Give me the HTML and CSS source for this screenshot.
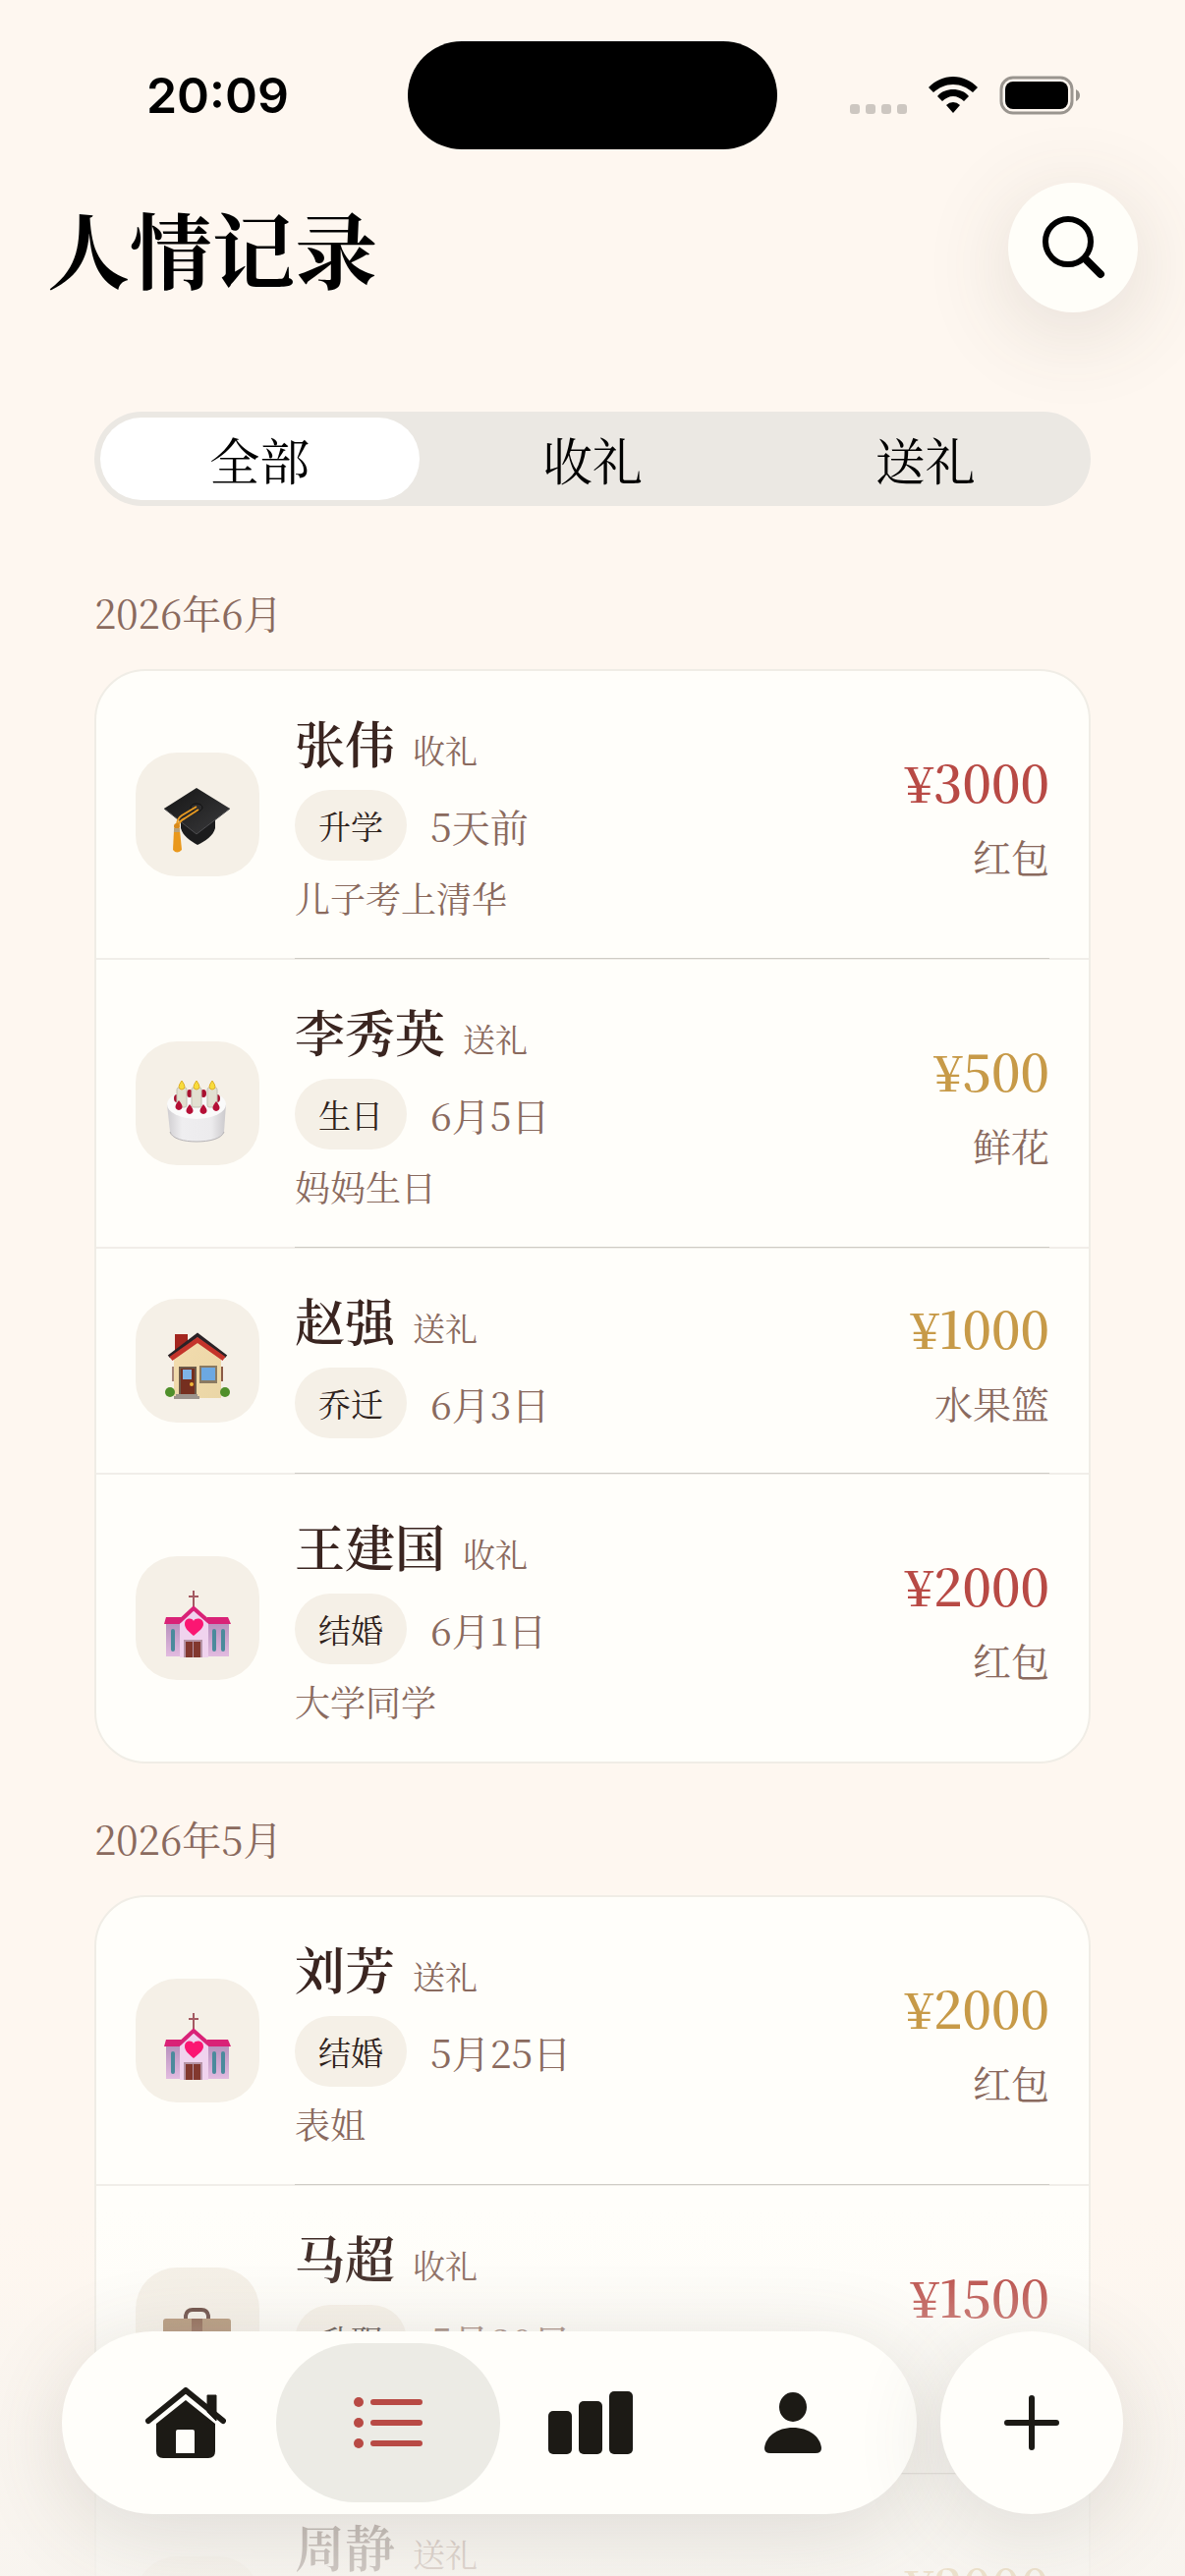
FILE: index.html
```html
<!DOCTYPE html>
<html lang="zh-CN">
  <head>
    <meta charset="UTF-8" />
    <meta name="viewport" content="width=device-width, initial-scale=1.0" />
    <title>人情记录</title>
    <link rel="stylesheet" href="styles.css" />
  </head>

  <body>
    <!-- event icons, used by the rows below -->
    <svg class="sprite" aria-hidden="true">
      <defs>
        <linearGradient id="cap-top" x1="0" y1="0" x2="1" y2="1">
          <stop offset="0" stop-color="#151515" />
          <stop offset="1" stop-color="#3a3a3c" />
        </linearGradient>
        <linearGradient id="cake-side" x1="0" y1="0" x2="1" y2="0">
          <stop offset="0" stop-color="#cfcdd0" />
          <stop offset="0.25" stop-color="#efeef0" />
          <stop offset="0.75" stop-color="#ecebed" />
          <stop offset="1" stop-color="#cbc9cc" />
        </linearGradient>
        <linearGradient id="wall" x1="0" y1="0" x2="1" y2="1">
          <stop offset="0" stop-color="#f3dcae" />
          <stop offset="1" stop-color="#ead6a6" />
        </linearGradient>
        <linearGradient id="wing" x1="0" y1="0" x2="0" y2="1">
          <stop offset="0" stop-color="#b58fbb" />
          <stop offset="1" stop-color="#e2bbe0" />
        </linearGradient>
        <linearGradient id="leather" x1="0" y1="0" x2="0" y2="1">
          <stop offset="0" stop-color="#a5825f" />
          <stop offset="1" stop-color="#7d5334" />
        </linearGradient>
      </defs>

      <symbol id="cap" viewBox="0 0 72 72">
        <path d="M19 34v10c2 8 10 13 17 17c8-4 16-9 18-17V34z" fill="#1c1c1d" />
        <path d="M35 3L69 24L35 50L2 24z" fill="url(#cap-top)" />
        <path d="M2 24L35 50L69 24" fill="none" stroke="#4d4d50" stroke-width="1" />
        <ellipse cx="35" cy="23" rx="6" ry="4" fill="#2c2c2e" stroke="#101010" />
        <path d="M35 22L20 31Q15 34 15 42M37 25L23 34Q17 37 16 42" fill="none" stroke="#e79a22" stroke-width="2" />
        <circle cx="15" cy="42" r="3" fill="#d98a1b" />
        <path d="M12 46h6l2 20q-5 5-9 0z" fill="#e9981c" />
        <rect x="12" y="44" width="6" height="4" fill="#b9a27a" />
      </symbol>

      <symbol id="cake" viewBox="0 0 72 72">
        <path d="M5 31L8 59C10 66 22 69 35 69S61 66 63 59L65 31z" fill="url(#cake-side)" />
        <path d="M8 59C10 66 22 69 35 69S61 66 63 59" fill="none" stroke="#b5b2b5" stroke-width="1" />
        <ellipse cx="35" cy="31" rx="30" ry="15" fill="#fafafa" />
        <g fill="#a8102f">
          <ellipse cx="15" cy="25" rx="3" ry="4" />
          <ellipse cx="28" cy="20" rx="3" ry="4" />
          <ellipse cx="42" cy="20" rx="3" ry="4" />
          <ellipse cx="56" cy="25" rx="3" ry="4" />
        </g>
        <g fill="#e2e0d1" stroke="#c2c0b2" stroke-width="1">
          <rect x="15" y="14" width="10" height="20" rx="2" />
          <rect x="30" y="14" width="10" height="20" rx="2" />
          <rect x="46" y="14" width="10" height="20" rx="2" />
        </g>
        <g fill="#f8dc3c" stroke="#dfae22" stroke-width="1">
          <path d="M20 7q6 8 0 9q-6-1 0-9z" />
          <path d="M35 7q6 8 0 9q-6-1 0-9z" />
          <path d="M51 7q6 8 0 9q-6-1 0-9z" />
        </g>
        <g fill="#b50f35">
          <path d="M17 27q7 8 0 10q-7-2 0-10z" />
          <path d="M28 31q7 8 0 10q-7-2 0-10z" />
          <path d="M42 31q7 8 0 10q-7-2 0-10z" />
          <path d="M55 28q7 8 0 10q-7-2 0-10z" />
        </g>
      </symbol>

      <symbol id="house" viewBox="0 0 72 72">
        <rect x="13" y="3" width="13" height="20" fill="#a3261f" />
        <rect x="10" y="36" width="3" height="15" fill="#a58478" />
        <rect x="59" y="36" width="3" height="15" fill="#8b5a45" />
        <path d="M12 68V25L36 8L60 25V68z" fill="url(#wall)" />
        <path d="M7 26L36 4L65 26" fill="none" stroke="#2a2226" stroke-width="4" />
        <path d="M9 28L36 9L63 28" fill="none" stroke="#c4342b" stroke-width="5" />
        <rect x="17" y="36" width="18" height="29" fill="#6d5a4a" />
        <rect x="19" y="38" width="14" height="27" fill="#752f1f" />
        <rect x="21" y="39" width="9" height="10" fill="#7fb4e6" />
        <circle cx="30" cy="54" r="2" fill="#f0b73a" />
        <rect x="38" y="35" width="18" height="18" fill="#8a7a62" />
        <rect x="40" y="37" width="14" height="13" fill="#6ca8e2" />
        <circle cx="8" cy="62" r="5" fill="#4f8f2a" />
        <circle cx="64" cy="62" r="5" fill="#4f8f2a" />
        <path d="M14 64h22v2h2v3H12v-3h2z" fill="#9b938c" />
      </symbol>

      <symbol id="church" viewBox="0 0 72 72">
        <path d="M32 2v18M27 8h10" stroke="#a45a62" stroke-width="2" />
        <rect x="4" y="33" width="16" height="36" fill="url(#wing)" />
        <rect x="46" y="33" width="22" height="36" fill="url(#wing)" />
        <path d="M4 29h16v7H2z" fill="#d92277" />
        <path d="M46 29h21l3 7H46z" fill="#d92277" />
        <path d="M18 70V34L32 21L47 34V70z" fill="#f0d3ee" />
        <path d="M17 34L32 20L48 34" fill="none" stroke="#d92277" stroke-width="4" />
        <path d="M32 48C26 43 23 40 23 36C23 30 30 29 32 33C34 29 42 30 42 36C42 40 38 43 32 48z" fill="#fb1672" />
        <rect x="9" y="41" width="4" height="23" rx="2" fill="#4b8a9c" />
        <rect x="51" y="41" width="4" height="23" rx="2" fill="#4b8a9c" />
        <rect x="60" y="41" width="4" height="23" rx="2" fill="#4b8a9c" />
        <rect x="22" y="52" width="19" height="18" fill="#b694a6" />
        <rect x="24" y="54" width="7" height="16" fill="#82382f" />
        <rect x="32" y="54" width="7" height="16" fill="#82382f" />
      </symbol>

      <symbol id="briefcase" viewBox="0 0 72 72">
        <path d="M24 19v-3q1-6 7-6h9q6 0 7 6v3" fill="none" stroke="#4e2a22" stroke-width="4" />
        <rect x="1" y="19" width="69" height="46" rx="3" fill="url(#leather)" />
        <rect x="30" y="19" width="11" height="46" fill="#75452e" />
      </symbol>
    </svg>

    <div class="app">
      <div class="statusbar">
        <span class="clock">20:09</span>
        <span class="island"></span>
        <div class="indicators">
          <span class="dots"><i></i><i></i><i></i><i></i></span>
          <svg class="wifi" viewBox="0 0 50 38" aria-hidden="true">
            <path d="M25 0C35 0 43 4 50 11L45 16C39 11 33 8 25 8S11 11 5 16L0 11C7 4 15 0 25 0z" />
            <path d="M25 13C31 13 37 15 41 20L36 25C33 22 29 20 25 20S17 22 14 25L9 20C13 15 19 13 25 13z" />
            <path d="M25 26Q29 26 32 29L25 37L18 29Q21 26 25 26z" />
          </svg>
          <svg class="battery" viewBox="0 0 83 40" aria-hidden="true">
            <rect x="2" y="2" width="72" height="36" rx="12" fill="none" stroke="#9a958f" stroke-width="3" />
            <rect x="6" y="6" width="64" height="28" rx="8" />
            <path d="M78 14q4 2 4 6t-4 6z" fill="#9a958f" />
          </svg>
        </div>
      </div>

      <header class="topbar">
        <h1>人情记录</h1>
        <button class="search" type="button" aria-label="搜索">
          <svg viewBox="0 0 66 66" aria-hidden="true">
            <circle cx="28" cy="27" r="23" />
            <path d="M46 45L61 60" class="handle" />
          </svg>
        </button>
      </header>

      <div class="segmented">
        <button type="button" class="active">全部</button>
        <button type="button">收礼</button>
        <button type="button">送礼</button>
      </div>

      <main>
        <section>
          <h2>2026年6月</h2>
          <ul class="card">
            <li class="row">
              <span class="tile"><svg><use href="#cap" /></svg></span>
              <div class="info">
                <div class="who"><h3>张伟</h3><span class="kind">收礼</span></div>
                <div class="when"><span class="tag">升学</span><time>5天前</time></div>
                <p class="note">儿子考上清华</p>
              </div>
              <div class="value"><strong class="in">¥3000</strong><span>红包</span></div>
            </li>
            <li class="row">
              <span class="tile"><svg><use href="#cake" /></svg></span>
              <div class="info">
                <div class="who"><h3>李秀英</h3><span class="kind">送礼</span></div>
                <div class="when"><span class="tag">生日</span><time>6月5日</time></div>
                <p class="note">妈妈生日</p>
              </div>
              <div class="value"><strong class="out">¥500</strong><span>鲜花</span></div>
            </li>
            <li class="row">
              <span class="tile"><svg><use href="#house" /></svg></span>
              <div class="info">
                <div class="who"><h3>赵强</h3><span class="kind">送礼</span></div>
                <div class="when"><span class="tag">乔迁</span><time>6月3日</time></div>
              </div>
              <div class="value"><strong class="out">¥1000</strong><span>水果篮</span></div>
            </li>
            <li class="row">
              <span class="tile"><svg><use href="#church" /></svg></span>
              <div class="info">
                <div class="who"><h3>王建国</h3><span class="kind">收礼</span></div>
                <div class="when"><span class="tag">结婚</span><time>6月1日</time></div>
                <p class="note">大学同学</p>
              </div>
              <div class="value"><strong class="in">¥2000</strong><span>红包</span></div>
            </li>
          </ul>
        </section>

        <section>
          <h2>2026年5月</h2>
          <ul class="card">
            <li class="row">
              <span class="tile"><svg><use href="#church" /></svg></span>
              <div class="info">
                <div class="who"><h3>刘芳</h3><span class="kind">送礼</span></div>
                <div class="when"><span class="tag">结婚</span><time>5月25日</time></div>
                <p class="note">表姐</p>
              </div>
              <div class="value"><strong class="out">¥2000</strong><span>红包</span></div>
            </li>
            <li class="row">
              <span class="tile"><svg><use href="#briefcase" /></svg></span>
              <div class="info">
                <div class="who"><h3>马超</h3><span class="kind">收礼</span></div>
                <div class="when"><span class="tag">升职</span><time>5月20日</time></div>
                <p class="note">同事</p>
              </div>
              <div class="value"><strong class="in">¥1500</strong><span>红包</span></div>
            </li>
            <li class="row">
              <span class="tile"><svg><use href="#cake" /></svg></span>
              <div class="info">
                <div class="who"><h3>周静</h3><span class="kind">送礼</span></div>
                <div class="when"><span class="tag">生日</span><time>5月15日</time></div>
                <p class="note">同学</p>
              </div>
              <div class="value"><strong class="out">¥2000</strong><span>红包</span></div>
            </li>
          </ul>
        </section>
      </main>

      <div class="dock">
        <nav class="tabs">
          <a href="#home" aria-label="首页">
            <svg width="82" height="72" viewBox="0 0 82 72" aria-hidden="true">
              <path d="M63 8h9v26L63 25z" stroke="#1c1a15" stroke-width="1" stroke-linejoin="round" />
              <path d="M3 34L41 3L79 34" fill="none" stroke="#1c1a15" stroke-width="6" stroke-linecap="round" stroke-linejoin="round" />
              <path fill-rule="evenodd" d="M41 13L71 37V65q0 7-7 7H18q-7 0-7-7V37zM33 43q-2 0-2 2V67H50V45q0-2-2-2z" />
            </svg>
          </a>
          <a href="#records" class="active" aria-label="记录">
            <svg width="70" height="52" viewBox="0 0 70 52" aria-hidden="true">
              <circle cx="5" cy="5" r="5" />
              <circle cx="5" cy="26" r="5" />
              <circle cx="5" cy="47" r="5" />
              <path d="M20 5H67M20 26H67M20 47H67" stroke="#b84a45" stroke-width="6" stroke-linecap="round" />
            </svg>
          </a>
          <a href="#stats" aria-label="统计">
            <svg width="86" height="64" viewBox="0 0 86 64" aria-hidden="true">
              <rect x="0" y="20" width="24" height="44" rx="5" />
              <rect x="31" y="10" width="24" height="54" rx="5" />
              <rect x="62" y="0" width="24" height="64" rx="5" />
            </svg>
          </a>
          <a href="#me" aria-label="我的">
            <svg width="58" height="62" viewBox="0 0 58 62" aria-hidden="true">
              <ellipse cx="29" cy="15" rx="14" ry="15" />
              <path d="M6 62q-6 0-6-5C1 45 13 36 29 36S57 45 58 57q0 5-6 5z" />
            </svg>
          </a>
        </nav>
        <button class="add" type="button" aria-label="新增">
          <svg width="56" height="56" viewBox="0 0 56 56" aria-hidden="true">
            <path d="M28 3V53M3 28H53" stroke="#1c1a15" stroke-width="6" stroke-linecap="round" />
          </svg>
        </button>
      </div>
    </div>
  </body>
</html>
```

FILE: styles.css
```css
* {
  box-sizing: border-box;
}

body {
  margin: 0;
  background-color: #fef7f0;
  color: #000;
  font-family: "Noto Serif CJK SC", "Noto Serif SC", "Songti SC", "Liberation Serif", "Noto Sans CJK SC", serif;
}

h1,
h2,
h3,
p,
ul {
  margin: 0;
  padding: 0;
  font-weight: normal;
}

button {
  border: none;
  padding: 0;
  color: inherit;
  font-family: inherit;
}

.sprite {
  position: absolute;
  width: 0;
  height: 0;
}

.app {
  position: relative;
  display: flex;
  flex-direction: column;
  height: 100vh;
  overflow: hidden;
}

/* status bar */

.statusbar {
  display: grid;
  grid-template-columns: 1fr auto 1fr;
  align-items: center;
  padding: 42px 0 34px;
}

.clock {
  padding-left: 28px;
  font-family: Inter, sans-serif;
  font-size: 50px;
  font-weight: 600;
  text-align: center;
}

.island {
  width: 376px;
  height: 110px;
  border-radius: 55px;
  background-color: #000;
}

.indicators {
  display: flex;
  align-items: center;
  justify-content: flex-end;
  gap: 22px;
  padding-right: 106px;
}

.dots {
  display: flex;
  gap: 6px;
  padding-top: 28px;
}

.dots i {
  width: 10px;
  height: 10px;
  border-radius: 3px;
  background-color: #cdc7c1;
}

.wifi {
  width: 50px;
  height: 38px;
}

.battery {
  width: 83px;
  height: 40px;
}

/* title and search */

.topbar {
  display: flex;
  align-items: center;
  justify-content: space-between;
  padding: 0 48px;
}

.topbar h1 {
  font-size: 84px;
  font-weight: bold;
  line-height: 120px;
}

.search {
  display: grid;
  place-items: center;
  width: 132px;
  height: 132px;
  border-radius: 50%;
  background-color: #fffef9;
  box-shadow: 0 18px 90px rgba(80, 75, 60, 0.16);
}

.search svg {
  width: 66px;
  height: 66px;
  fill: none;
  stroke: #000;
  stroke-width: 6;
}

.search .handle {
  stroke-width: 8;
  stroke-linecap: round;
}

.segmented {
  display: flex;
  gap: 14px;
  margin: 101px 96px 80px;
  padding: 6px;
  border-radius: 48px;
  background-color: #ebe8e3;
}

.segmented button {
  flex: 1;
  height: 84px;
  border-radius: 42px;
  background: none;
  font-size: 51px;
}

.segmented .active {
  background-color: #fff;
}

/* records */

main {
  flex: 1;
  min-height: 0;
  padding: 0 96px;
  overflow: hidden;
}

section {
  margin-bottom: 48px;
}

h2 {
  margin-bottom: 30px;
  color: #8a6a5e;
  font-size: 40px;
  line-height: 56px;
}

.card {
  border: 2px solid #f0ede6;
  border-radius: 52px;
  background-color: #fffefa;
  list-style: none;
}

.row {
  position: relative;
  display: flex;
  align-items: center;
  gap: 36px;
  padding: 35px 40px;
  border-bottom: 2px solid #f1eee9;
}

.row:last-child {
  border-bottom: none;
}

/* darker hairline that starts under the text */
.row:not(:last-child)::after {
  content: "";
  position: absolute;
  right: 40px;
  bottom: -1px;
  left: 202px;
  height: 1px;
  background-color: #cfccc5;
}

.tile {
  display: grid;
  place-items: center;
  width: 126px;
  height: 126px;
  padding-top: 12px;
  border-radius: 42px;
  background-color: #f5f0e7;
}

.tile svg {
  width: 72px;
  height: 72px;
}

.info {
  flex: 1;
  display: flex;
  flex-direction: column;
  padding-top: 4px;
}

.who {
  display: flex;
  align-items: baseline;
  gap: 18px;
  height: 66px;
  margin-bottom: 16px;
  line-height: 66px;
}

h3 {
  color: #3a2520;
  font-size: 51px;
  font-weight: 600;
}

.kind {
  color: #8a6a5e;
  font-size: 33px;
}

.when {
  display: flex;
  align-items: center;
  gap: 24px;
}

.tag {
  height: 72px;
  padding: 0 24px;
  border-radius: 36px;
  background-color: #f5f0e7;
  color: #2e221c;
  font-size: 33px;
  line-height: 72px;
}

time {
  color: #8a6a5e;
  font-size: 39px;
}

.note {
  margin-top: 12px;
  color: #8a6a5e;
  font-size: 36px;
  line-height: 52px;
}

.value {
  display: flex;
  flex-direction: column;
  align-items: flex-end;
  gap: 12px;
  color: #8a6a5e;
  font-size: 39px;
  line-height: 56px;
}

.value strong {
  font-size: 51px;
  font-weight: 600;
  line-height: 72px;
}

.in {
  color: #b84a45;
}

.out {
  color: #c79a48;
}

/* floating tab bar over a fade */

.dock {
  position: absolute;
  right: 0;
  bottom: 0;
  left: 0;
  display: flex;
  gap: 24px;
  padding: 123px 63px 63px;
  background: linear-gradient(rgba(247, 244, 239, 0), rgba(247, 244, 239, 0.08) 18%, rgba(247, 244, 239, 0.35) 33%, rgba(247, 244, 239, 0.74) 88%, rgba(247, 244, 239, 0.8));
}

.tabs {
  flex: 1;
  display: flex;
  padding: 12px;
  border-radius: 93px;
  background-color: #fffefa;
  box-shadow: 0 18px 90px rgba(80, 75, 60, 0.16);
}

.tabs a {
  flex: 1;
  display: grid;
  place-items: center;
  height: 162px;
  border-radius: 81px;
}

.tabs a + a {
  margin-left: -22px;
}

.tabs svg {
  fill: #1c1a15;
}

.tabs .active {
  background-color: #ecebe5;
}

.tabs .active svg {
  fill: #b84a45;
}

.add {
  display: grid;
  place-items: center;
  width: 186px;
  height: 186px;
  border-radius: 50%;
  background-color: #fffefa;
  box-shadow: 0 18px 90px rgba(80, 75, 60, 0.16);
}
```
